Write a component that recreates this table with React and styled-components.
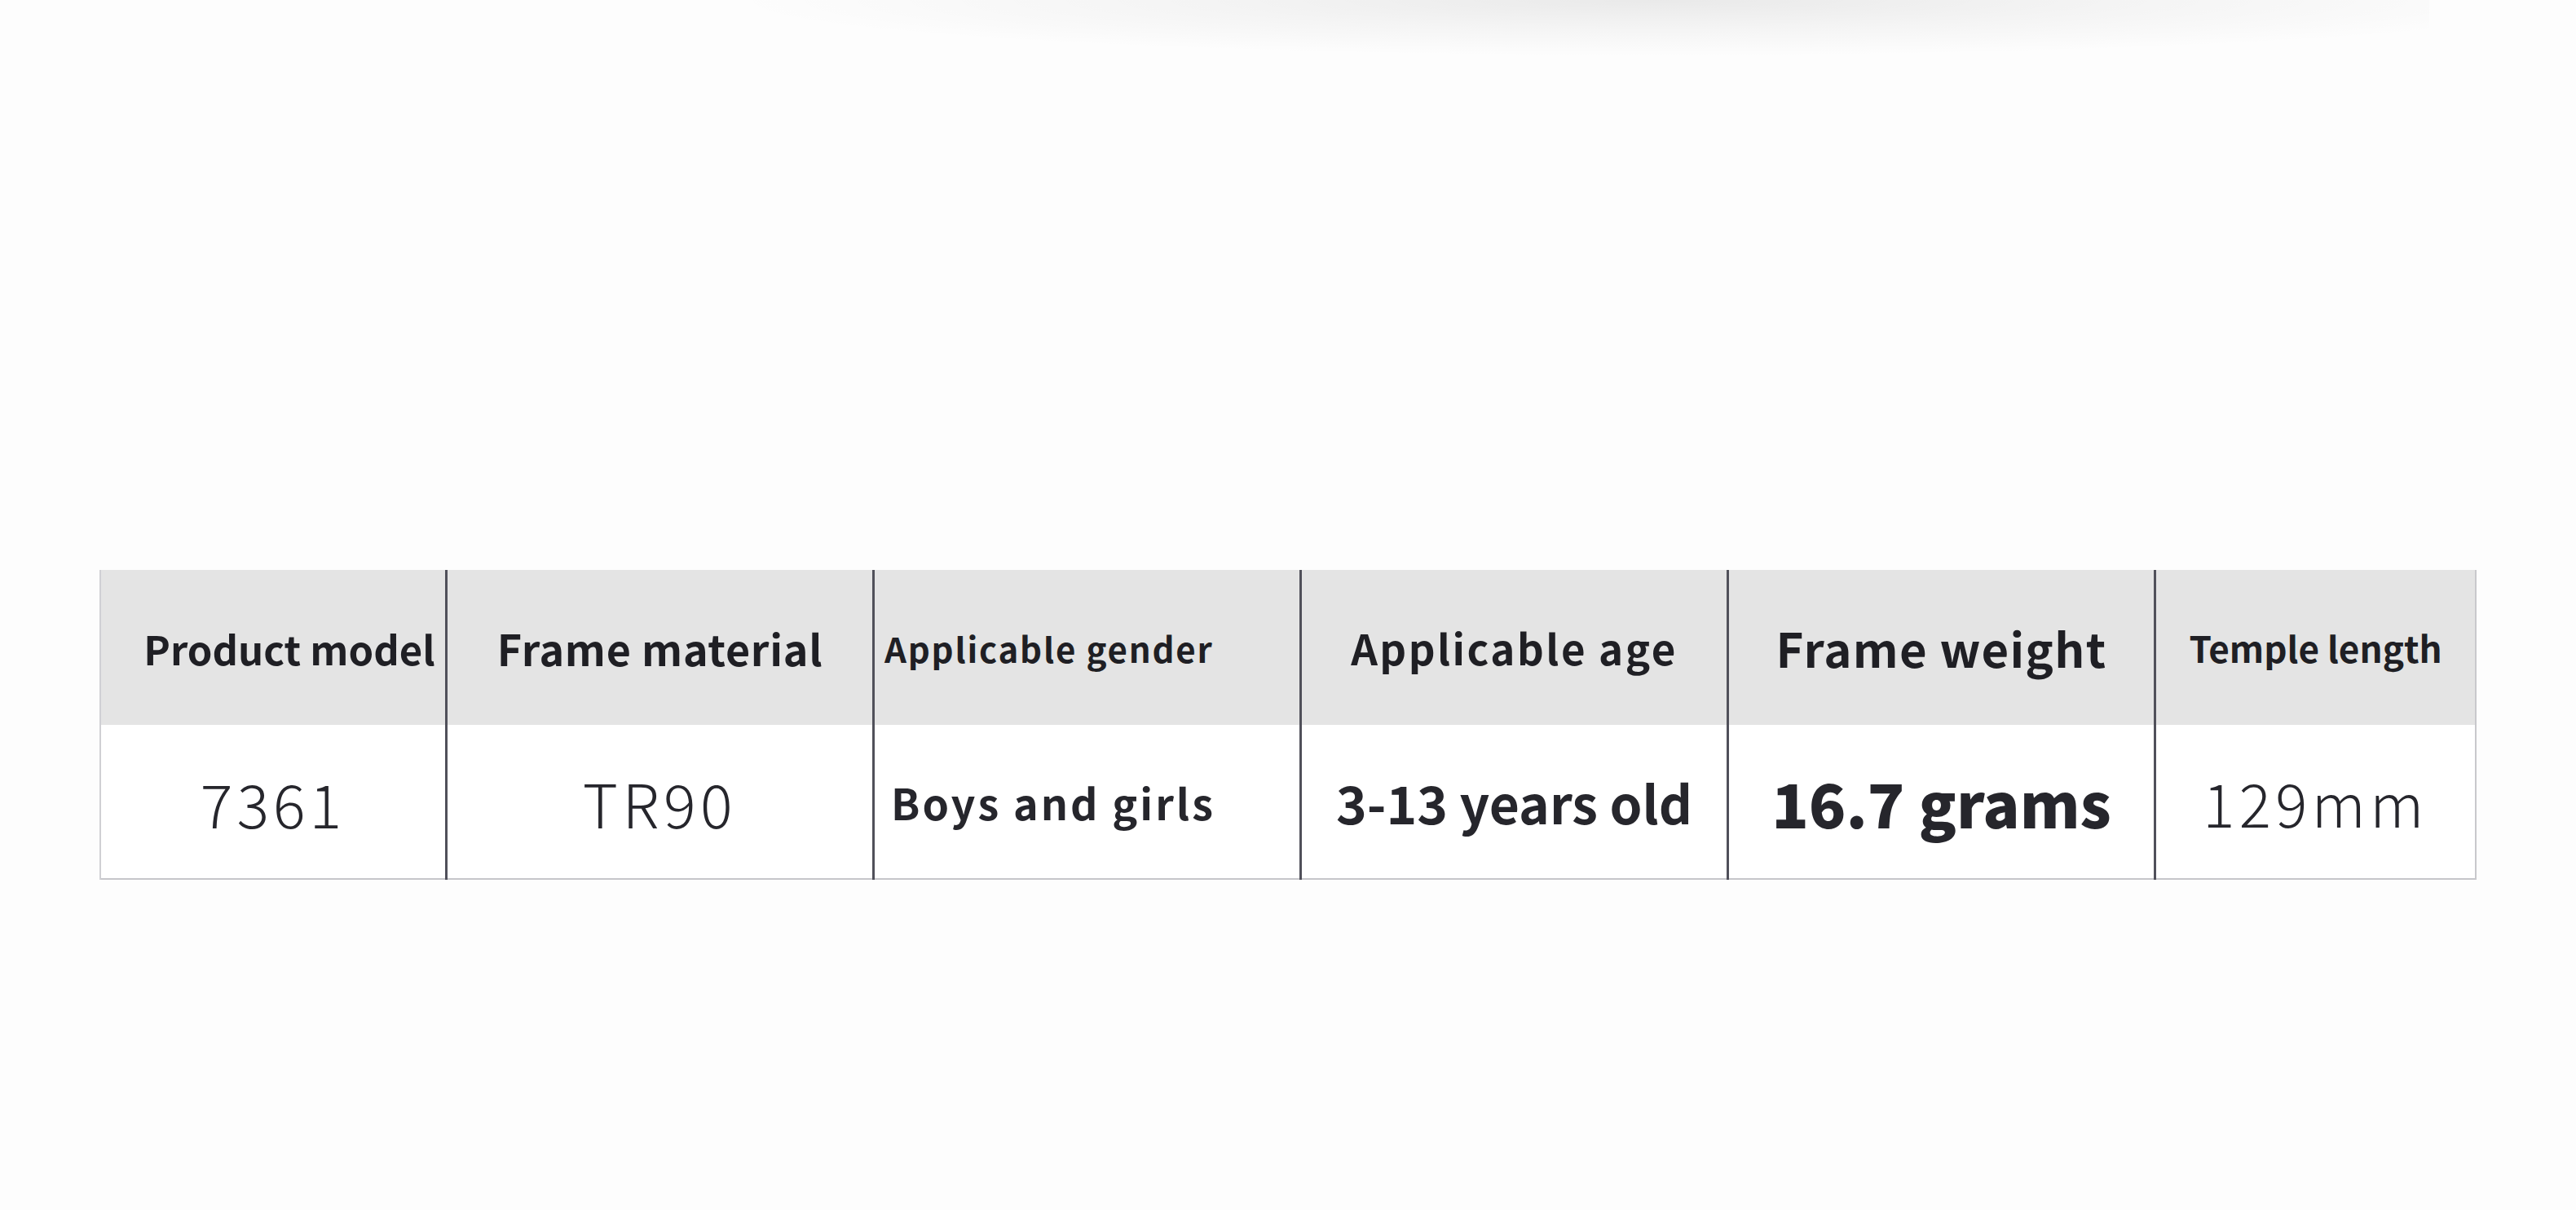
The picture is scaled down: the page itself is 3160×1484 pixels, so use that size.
import styled, { createGlobalStyle } from "styled-components";

const GlobalStyle = createGlobalStyle`
  html, body {
    margin: 0;
    padding: 0;
  }
  body {
    background: #fdfdfd;
    font-family: "Noto Sans CJK SC", "Noto Sans", sans-serif;
  }
`;

// sizes tuned by eye against the product sheet
const specs = [
  { label: "Product model", labelSize: 49, labelShift: 40, value: "7361", valueSize: 74, valueWeight: 300, valueSpacing: 5, width: 424 },
  { label: "Frame material", labelSize: 52, labelSpacing: 0.7, value: "TR90", valueSize: 74, valueWeight: 300, valueSpacing: 5.5, width: 524 },
  { label: "Applicable gender", labelSize: 42, labelSpacing: 1.8, value: "Boys and girls", valueSize: 52, valueWeight: 700, valueSpacing: 3, width: 524, align: "left" },
  { label: "Applicable age", labelSize: 51, labelSpacing: 2.5, value: "3-13 years old", valueSize: 64, valueWeight: 700, width: 524 },
  { label: "Frame weight", labelSize: 58, labelSpacing: 1.3, value: "16.7 grams", valueSize: 75, valueWeight: 900, width: 524 },
  { label: "Temple length", labelSize: 44, value: "129mm", valueSize: 73, valueWeight: 300, valueSpacing: 5.5, width: 396 },
];

const App = () => {
  return (
    <Page>
      <GlobalStyle />
      <Smudge />
      <Table>
        {specs.map((spec, i) => (
          <Column key={spec.label} $width={spec.width} $first={i === 0} $last={i === specs.length - 1}>
            <HeadCell $align={spec.align} $shift={spec.labelShift}>
              <Label $size={spec.labelSize} $spacing={spec.labelSpacing}>
                {spec.label}
              </Label>
            </HeadCell>
            <BodyCell $align={spec.align}>
              <Value $size={spec.valueSize} $weight={spec.valueWeight} $spacing={spec.valueSpacing}>
                {spec.value}
              </Value>
            </BodyCell>
          </Column>
        ))}
      </Table>
    </Page>
  );
};

export default App;

const Page = styled.div`
  width: 3160px;
  height: 1484px;
  box-sizing: border-box;
  display: flex;
  flex-direction: column;
  align-items: center;
  overflow: hidden;
`;

const Smudge = styled.div`
  width: 2100px;
  height: 70px;
  margin-left: 700px;
  margin-bottom: 629px;
  background: radial-gradient(
    ellipse at 55% 0%,
    rgba(0, 0, 0, 0.08) 0%,
    rgba(0, 0, 0, 0.035) 35%,
    rgba(0, 0, 0, 0) 70%
  );
`;

const Table = styled.div`
  display: flex;
  width: 2916px;
`;

const Column = styled.div`
  width: ${(p) => p.$width}px;
  display: flex;
  flex-direction: column;
  box-sizing: border-box;
  border-left: ${(p) => (p.$first ? "2px solid #d0d0d4" : "3px solid #50505a")};
  border-right: ${(p) => (p.$last ? "2px solid #c8c8cc" : "none")};
`;

const HeadCell = styled.div`
  height: 190px;
  background: #e4e4e4;
  display: flex;
  align-items: center;
  justify-content: ${(p) => (p.$align === "left" ? "flex-start" : "center")};
  padding-left: ${(p) => (p.$align === "left" ? 12 : p.$shift || 0)}px;
`;

const BodyCell = styled.div`
  height: 188px;
  background: #ffffff;
  border-bottom: 2px solid #c6c6ca;
  display: flex;
  align-items: center;
  justify-content: ${(p) => (p.$align === "left" ? "flex-start" : "center")};
  padding-left: ${(p) => (p.$align === "left" ? 20 : 0)}px;
`;

const Label = styled.span`
  font-size: ${(p) => p.$size}px;
  font-weight: 700;
  letter-spacing: ${(p) => p.$spacing || 0}px;
  color: #1f1f24;
  white-space: nowrap;
`;

const Value = styled.span`
  font-size: ${(p) => p.$size}px;
  font-weight: ${(p) => p.$weight};
  letter-spacing: ${(p) => p.$spacing || 0}px;
  color: #26262c;
  white-space: nowrap;
`;
